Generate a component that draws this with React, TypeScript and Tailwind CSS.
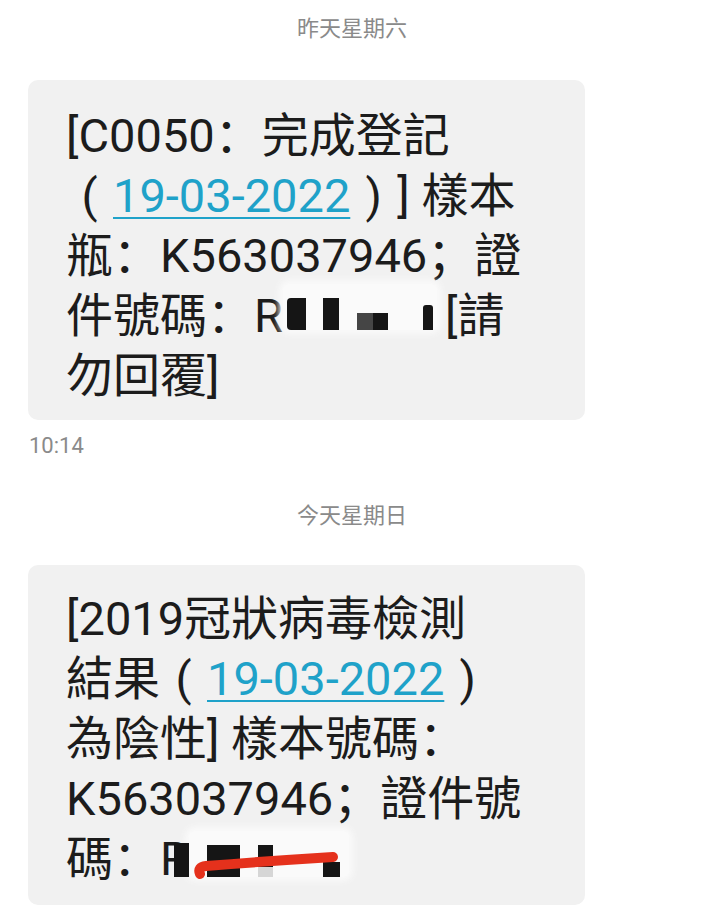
import React from "react";

const FONT = {
  fontFamily: 'Roboto, "Noto Sans CJK SC", "Noto Sans CJK TC", sans-serif',
};

function DateLink() {
  return (
    <span className="text-[#1fa2c9] underline decoration-[#1fa2c9] decoration-2 underline-offset-[5px]">
      19-03-2022
    </span>
  );
}

function Paren({ children }: { children: React.ReactNode }) {
  return <span className="inline-block w-[47px] text-center">{children}</span>;
}

function Redact1() {
  return (
    <span className="inline-flex h-[60px] w-[162px] align-top items-end pb-[16px]">
      <span className="flex h-[46px] w-[154px] items-end rounded-md bg-[#fafafa] shadow-[0_0_6px_4px_#fafafa]">
        <span className="ml-[4px] h-[32px] w-[19px] rounded-l-[4px] bg-[#151515]" />
        <span className="ml-[17px] h-[32px] w-[16px] bg-[#151515]" />
        <span className="ml-[18px] h-[17px] w-[16px] bg-[#454545]" />
        <span className="h-[17px] w-[15px] bg-[#151515]" />
        <span className="ml-[35px] h-[25px] w-[10px] rounded-t-[3px] bg-[#151515]" />
      </span>
    </span>
  );
}

function Redact2() {
  return (
    <span className="relative inline-flex h-[60px] w-[170px] align-top items-end pb-[12px]">
      <span className="flex h-[46px] w-[160px] items-end rounded-md bg-[#fafafa] shadow-[0_0_6px_4px_#fafafa]">
        <span className="-ml-[15px] h-[34px] w-[15px] bg-[#151515]" />
        <span className="ml-[18px] h-[32px] w-[33px] bg-[#151515]" />
        <span className="ml-[18px] flex h-[32px] w-[15px] flex-col">
          <span className="h-[22px] bg-[#151515]" />
          <span className="h-[10px] bg-[#d6d6d6]" />
        </span>
        <span className="ml-[50px] h-[15px] w-[17px] bg-[#151515]" />
      </span>
      <svg
        className="absolute left-0 top-0"
        width="170"
        height="60"
        viewBox="0 0 170 60"
      >
        <path
          d="M11 45 Q8 38 17 37 Q80 32 144 28"
          fill="none"
          stroke="#e5311c"
          strokeWidth="10"
          strokeLinecap="round"
        />
      </svg>
    </span>
  );
}

export default function App() {
  return (
    <div
      className="flex h-[922px] w-[704px] flex-col overflow-hidden bg-white pt-[14px]"
      style={FONT}
    >
      <div className="h-[30px] text-center text-[22px] leading-[30px] text-[#8a8a8a]">
        昨天星期六
      </div>

      <div className="ml-[28px] mt-[36px] h-[340px] w-[557px] rounded-[10px] bg-[#f1f1f1] pl-[38px] pt-[26px] text-[47px] leading-[60px] whitespace-nowrap text-[#1c1c1c]">
        <div>[C0050：完成登記</div>
        <div>
          <Paren>(</Paren>
          <DateLink />
          <Paren>)</Paren>] 樣本
        </div>
        <div>瓶：K563037946；證</div>
        <div>
          件號碼：R<Redact1 />[請
        </div>
        <div>勿回覆]</div>
      </div>

      <div className="ml-[29px] mt-[11px] h-[30px] text-[22px] leading-[30px] text-[#8a8a8a]">
        10:14
      </div>

      <div className="mt-[40px] h-[30px] text-center text-[22px] leading-[30px] text-[#8a8a8a]">
        今天星期日
      </div>

      <div className="ml-[28px] mt-[34px] h-[340px] w-[557px] rounded-[10px] bg-[#f1f1f1] pl-[38px] pt-[24px] text-[47px] leading-[60px] whitespace-nowrap text-[#1c1c1c]">
        <div>[2019冠狀病毒檢測</div>
        <div>
          結果<Paren>(</Paren>
          <DateLink />
          <Paren>)</Paren>
        </div>
        <div>為陰性] 樣本號碼：</div>
        <div>K563037946；證件號</div>
        <div>
          碼：R<Redact2 />
        </div>
      </div>
    </div>
  );
}
